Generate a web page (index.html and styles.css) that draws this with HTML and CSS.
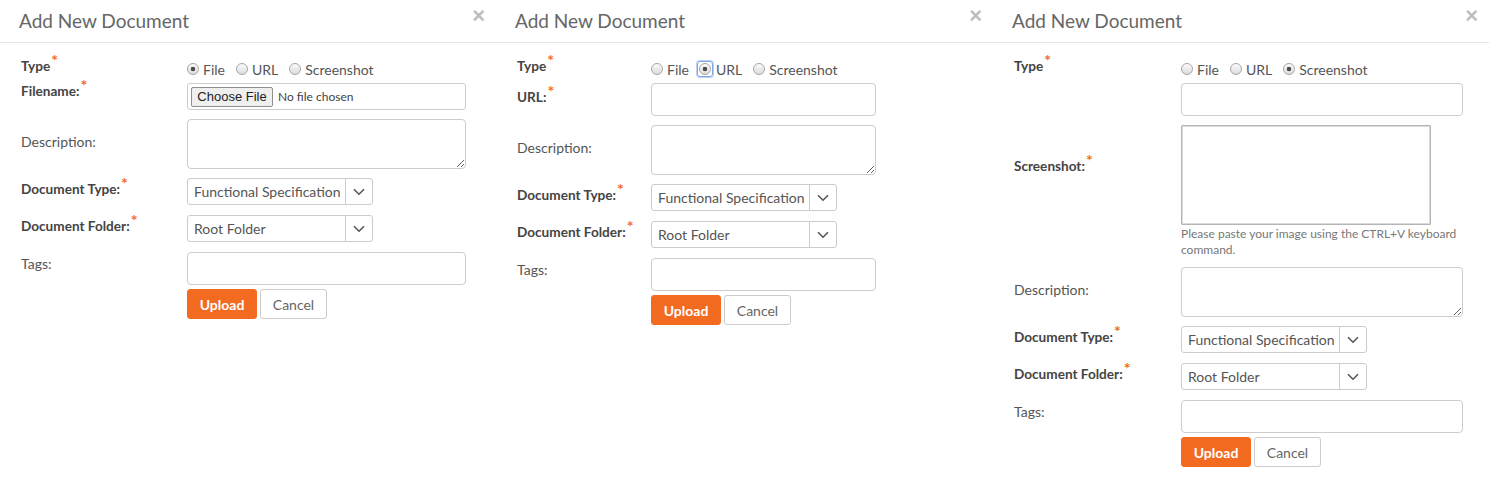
FILE: index.html
```html
<!DOCTYPE html>
<html lang="en">
<head>
<meta charset="utf-8">
<title>Add New Document</title>
<link rel="stylesheet" href="styles.css">
</head>
<body>
<div class="panels">

  <!-- Panel 1: File -->
  <section class="panel panel--file">
    <header class="panel-head">
      <h2 class="panel-title">Add New Document</h2>
      <span class="close">×</span>
    </header>
    <div class="panel-body">
      <div class="row row--type">
        <div class="label label--strong">Type<sup class="req">*</sup></div>
        <div class="radios">
          <span class="opt"><span class="dot dot--on"></span>File</span>
          <span class="opt"><span class="dot"></span>URL</span>
          <span class="opt"><span class="dot"></span>Screenshot</span>
        </div>
      </div>
      <div class="row row--file">
        <div class="label label--strong">Filename:<sup class="req">*</sup></div>
        <div class="filebox">
          <span class="filebtn">Choose File</span>
          <span class="filename">No file chosen</span>
        </div>
      </div>
      <div class="row row--desc">
        <div class="label">Description:</div>
        <textarea class="textarea"></textarea>
      </div>
      <div class="row row--select">
        <div class="label label--strong">Document Type:<sup class="req">*</sup></div>
        <div class="select">
          <span class="select-value">Functional Specification</span>
          <span class="select-arrow"><svg width="12" height="8" viewBox="0 0 12 8"><polyline points="1,1.2 6,6.2 11,1.2" fill="none" stroke="#555" stroke-width="1.6"/></svg></span>
        </div>
      </div>
      <div class="row row--select">
        <div class="label label--strong">Document Folder:<sup class="req">*</sup></div>
        <div class="select">
          <span class="select-value">Root Folder</span>
          <span class="select-arrow"><svg width="12" height="8" viewBox="0 0 12 8"><polyline points="1,1.2 6,6.2 11,1.2" fill="none" stroke="#555" stroke-width="1.6"/></svg></span>
        </div>
      </div>
      <div class="row row--tags">
        <div class="label">Tags:</div>
        <input class="input" type="text">
      </div>
      <div class="row row--actions">
        <button class="btn btn-primary" type="button">Upload</button>
        <button class="btn btn-default" type="button">Cancel</button>
      </div>
    </div>
  </section>

  <!-- Panel 2: URL -->
  <section class="panel panel--url">
    <header class="panel-head">
      <h2 class="panel-title">Add New Document</h2>
      <span class="close">×</span>
    </header>
    <div class="panel-body">
      <div class="row row--type">
        <div class="label label--strong">Type<sup class="req">*</sup></div>
        <div class="radios">
          <span class="opt"><span class="dot"></span>File</span>
          <span class="opt opt--focus"><span class="ring"><span class="dot dot--on"></span></span>URL</span>
          <span class="opt"><span class="dot"></span>Screenshot</span>
        </div>
      </div>
      <div class="row row--url">
        <div class="label label--strong">URL:<sup class="req">*</sup></div>
        <input class="input" type="text">
      </div>
      <div class="row row--desc">
        <div class="label">Description:</div>
        <textarea class="textarea"></textarea>
      </div>
      <div class="row row--select">
        <div class="label label--strong">Document Type:<sup class="req">*</sup></div>
        <div class="select">
          <span class="select-value">Functional Specification</span>
          <span class="select-arrow"><svg width="12" height="8" viewBox="0 0 12 8"><polyline points="1,1.2 6,6.2 11,1.2" fill="none" stroke="#555" stroke-width="1.6"/></svg></span>
        </div>
      </div>
      <div class="row row--select">
        <div class="label label--strong">Document Folder:<sup class="req">*</sup></div>
        <div class="select">
          <span class="select-value">Root Folder</span>
          <span class="select-arrow"><svg width="12" height="8" viewBox="0 0 12 8"><polyline points="1,1.2 6,6.2 11,1.2" fill="none" stroke="#555" stroke-width="1.6"/></svg></span>
        </div>
      </div>
      <div class="row row--tags">
        <div class="label">Tags:</div>
        <input class="input" type="text">
      </div>
      <div class="row row--actions">
        <button class="btn btn-primary" type="button">Upload</button>
        <button class="btn btn-default" type="button">Cancel</button>
      </div>
    </div>
  </section>

  <!-- Panel 3: Screenshot -->
  <section class="panel panel--shot">
    <header class="panel-head">
      <h2 class="panel-title">Add New Document</h2>
      <span class="close">×</span>
    </header>
    <div class="panel-body">
      <div class="row row--type">
        <div class="label label--strong">Type<sup class="req">*</sup></div>
        <div class="radios">
          <span class="opt"><span class="dot"></span>File</span>
          <span class="opt"><span class="dot"></span>URL</span>
          <span class="opt"><span class="dot dot--on"></span>Screenshot</span>
        </div>
      </div>
      <div class="row row--url">
        <div class="label"></div>
        <input class="input" type="text">
      </div>
      <div class="row row--shot">
        <div class="label label--strong label--shot">Screenshot:<sup class="req">*</sup></div>
        <div class="field">
          <div class="shotbox"></div>
          <p class="hint">Please paste your image using the CTRL+V keyboard command.</p>
        </div>
      </div>
      <div class="row row--desc">
        <div class="label">Description:</div>
        <textarea class="textarea"></textarea>
      </div>
      <div class="row row--select">
        <div class="label label--strong">Document Type:<sup class="req">*</sup></div>
        <div class="select">
          <span class="select-value">Functional Specification</span>
          <span class="select-arrow"><svg width="12" height="8" viewBox="0 0 12 8"><polyline points="1,1.2 6,6.2 11,1.2" fill="none" stroke="#555" stroke-width="1.6"/></svg></span>
        </div>
      </div>
      <div class="row row--select">
        <div class="label label--strong">Document Folder:<sup class="req">*</sup></div>
        <div class="select">
          <span class="select-value">Root Folder</span>
          <span class="select-arrow"><svg width="12" height="8" viewBox="0 0 12 8"><polyline points="1,1.2 6,6.2 11,1.2" fill="none" stroke="#555" stroke-width="1.6"/></svg></span>
        </div>
      </div>
      <div class="row row--tags">
        <div class="label">Tags:</div>
        <input class="input" type="text">
      </div>
      <div class="row row--actions">
        <button class="btn btn-primary" type="button">Upload</button>
        <button class="btn btn-default" type="button">Cancel</button>
      </div>
    </div>
  </section>

</div>
</body>
</html>
```

FILE: styles.css
```css
html, body {
  margin: 0;
  padding: 0;
  background: #fff;
}

body {
  font-family: Lato, "Open Sans", Arial, sans-serif;
  color: #555;
}

.panels {
  display: grid;
  grid-template-columns: 496px 497px 496px;
  height: 477px;
  overflow: hidden;
}

.panel {
  --lab: 166px;
  --fw: 279px;
  min-width: 0;
}

.panel--url {
  --lab: 134px;
  --fw: 225px;
}

.panel--shot {
  --lab: 167px;
  --fw: 282px;
}

/* header */
.panel-head {
  height: 42px;
  border-bottom: 1px solid #e5e5e5;
  display: flex;
  justify-content: space-between;
  align-items: flex-start;
  padding: 0 11px 0 19px;
}

.panel-title {
  margin: 0;
  font-size: 19px;
  font-weight: 400;
  color: #666;
  line-height: 42px;
}

.close {
  font-family: "Liberation Sans", Arial, sans-serif;
  font-size: 22px;
  font-weight: 700;
  line-height: 1;
  color: #bdbdbd;
  margin-top: 5px;
}

/* body */
.panel-body {
  padding: 16px 0 0 21px;
}

.row {
  display: flex;
  align-items: center;
  margin-bottom: 10px;
}

.label {
  width: var(--lab);
  flex: none;
  box-sizing: border-box;
  font-size: 14px;
  line-height: 18px;
  color: #555;
  padding-bottom: 3px;
}

.label--strong {
  font-size: 13.6px;
  font-weight: 700;
  color: #444;
}

.req {
  color: #f26b22;
  font-size: 16px;
  font-weight: 700;
  line-height: 0;
  vertical-align: 5px;
  margin-left: 1px;
}

/* type row */
.row--type {
  height: 20px;
  margin-bottom: 4px;
}

.row--type .label {
  padding-bottom: 6px;
}

.radios {
  display: flex;
  align-items: center;
  font-size: 14px;
  color: #555;
  padding-top: 0;
}

.opt {
  display: flex;
  align-items: center;
  margin-right: 11px;
}

.dot {
  width: 12px;
  height: 12px;
  box-sizing: border-box;
  border-radius: 50%;
  border: 1px solid #a6a6a6;
  background: linear-gradient(#fbfbfb, #dcdcdc);
  margin-right: 4px;
  flex: none;
}

.dot--on {
  background:
    radial-gradient(circle at 50% 50%, #4d4d4d 0 2px, transparent 2.6px),
    linear-gradient(#fbfbfb, #dcdcdc);
}

.ring {
  display: flex;
  padding: 1px;
  border: 1px solid #7da6e6;
  border-radius: 3px;
  box-shadow: 0 0 0 1px #bcd2f5;
  margin-left: -3px;
  margin-right: 3px;
}

.ring .dot {
  margin-right: 0;
}

/* controls */
.input {
  display: block;
  width: var(--fw);
  height: 33px;
  box-sizing: border-box;
  border: 1px solid #ccc;
  border-radius: 4px;
  margin: 0;
  padding: 0 8px;
  font: inherit;
  background: #fff;
}

.textarea {
  display: block;
  width: var(--fw);
  height: 50px;
  box-sizing: border-box;
  border: 1px solid #ccc;
  border-radius: 4px;
  margin: 0;
  padding: 4px 8px;
  font: inherit;
  resize: vertical;
  background: #fff;
}

.row--file {
  height: 27px;
  margin-bottom: 9px;
}

.row--file .label {
  padding-bottom: 12px;
}

.filebox {
  width: var(--fw);
  height: 27px;
  box-sizing: border-box;
  border: 1px solid #ccc;
  border-radius: 3px;
  display: flex;
  align-items: center;
  padding-left: 3px;
}

.filebtn {
  height: 20px;
  width: 82px;
  box-sizing: border-box;
  border: 1px solid #8f8f8f;
  border-radius: 2px;
  background: #efefef;
  font-family: "Liberation Sans", Arial, sans-serif;
  font-size: 13px;
  line-height: 18px;
  color: #222;
  text-align: center;
}

.filename {
  font-size: 12px;
  color: #444;
  margin-left: 5px;
}

.row--url {
  margin-bottom: 9px;
}

.row--url .label {
  padding-bottom: 6px;
}

.row--desc {
  margin-bottom: 9px;
}

.row--desc .label {
  padding-bottom: 4px;
}

.select {
  width: 186px;
  height: 27px;
  box-sizing: border-box;
  border: 1px solid #ccc;
  border-radius: 3px;
  display: flex;
  background: #fff;
}

.select-value {
  flex: 1;
  min-width: 0;
  padding-left: 6px;
  font-size: 14px;
  line-height: 25px;
  color: #555;
  white-space: nowrap;
  overflow: hidden;
}

.select-arrow {
  width: 26px;
  flex: none;
  border-left: 1px solid #ccc;
  display: flex;
  align-items: center;
  justify-content: center;
}

.row--select .label {
  padding-bottom: 6px;
}

.row--tags {
  margin-bottom: 4px;
}

.row--tags .label {
  padding-bottom: 9px;
}

/* screenshot */
.row--shot {
  align-items: flex-start;
  margin-bottom: 9px;
}

.label--shot {
  padding-top: 32px;
}

.field {
  width: var(--fw);
}

.shotbox {
  width: 250px;
  height: 100px;
  box-sizing: border-box;
  border: 1px solid #b5b5b5;
  box-shadow: inset 0 0 0 1px #dcdcdc;
  border-radius: 1px;
}

.hint {
  margin: 1px 0 0;
  font-size: 12px;
  line-height: 16px;
  color: #777;
}

/* actions */
.row--actions {
  padding-left: var(--lab);
  margin-bottom: 0;
}

.btn {
  height: 30px;
  box-sizing: border-box;
  border-radius: 3px;
  font-family: inherit;
  font-size: 14px;
  padding: 0;
  margin: 0;
  cursor: pointer;
}

.btn-primary {
  width: 70px;
  background: #f36b21;
  border: 1px solid #f36b21;
  color: #fff;
  font-weight: 700;
}

.btn-default {
  width: 67px;
  margin-left: 3px;
  background: #fff;
  border: 1px solid #ccc;
  color: #666;
}
```
